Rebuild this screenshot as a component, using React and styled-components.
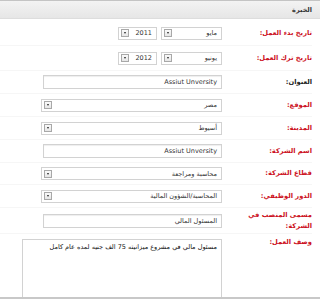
import React from 'react';
import styled, { createGlobalStyle } from 'styled-components';

const GlobalStyle = createGlobalStyle`
  html, body {
    margin: 0;
    padding: 0;
    background: #fff;
  }
  body {
    font-family: Tahoma, "DejaVu Sans", sans-serif;
  }
`;

const Page = styled.div`
  direction: rtl;
  width: 320px;
  height: 299px;
  box-sizing: border-box;
  overflow: hidden;
  border-top: 1px solid #c4c4c4;
  border-bottom: 2px solid #c8c8c8;
  background: #fff;
`;

const Header = styled.div`
  height: 17px;
  display: flex;
  align-items: center;
  padding-right: 8px;
  background: linear-gradient(#f3f3f3, #e6e6e6);
  border-bottom: 1px solid #ddd;
  font-size: 6.5px;
  font-weight: bold;
  color: #333;
`;

const Form = styled.div`
  padding: 2px 8px 0 0;
`;

const Row = styled.div`
  display: grid;
  grid-template-columns: 90px 200px;
  align-items: ${p => (p.top ? 'start' : 'center')};
  min-height: ${p => p.h || 22}px;
  border-bottom: 1px solid #f6f6f6;
`;

const Label = styled.div`
  font-size: 6.7px;
  font-weight: bold;
  line-height: 11px;
  color: ${p => (p.plain ? '#222' : '#cc1022')};
  padding-top: ${p => (p.top ? 3 : 0)}px;
  padding-left: 10px;
`;

const Field = styled.div`
  display: flex;
  gap: 4px;
  align-items: center;
`;

const Box = styled.div`
  box-sizing: border-box;
  width: ${p => p.w}px;
  height: 13px;
  border: 1px solid #d2d2d2;
  background: #fff;
  display: flex;
  align-items: center;
  justify-content: space-between;
  padding: 0 4px 0 2px;
  font-size: 6.5px;
  color: #333;
  font-family: ${p => (p.latin ? '"DejaVu Sans", sans-serif' : 'inherit')};
`;

const TextInput = styled(Box)`
  height: 14px;
  box-shadow: inset 0 1px 1px #eee;
`;

const DropBtn = styled.span`
  order: 2;
  box-sizing: border-box;
  width: 8px;
  height: 8px;
  border: 1px solid #a8a8a8;
  background: linear-gradient(#fafafa, #e6e6e6);
  display: flex;
  align-items: center;
  justify-content: center;

  &::after {
    content: '';
    border-left: 1.5px solid transparent;
    border-right: 1.5px solid transparent;
    border-top: 2px solid #222;
  }
`;

const TextArea = styled.div`
  box-sizing: border-box;
  width: 200px;
  height: 90px;
  border: 1px solid #d2d2d2;
  padding: 3px 4px;
  font-size: 6.5px;
  color: #111;
  margin-top: 5px;
`;

const Select = ({ w, value }) => (
  <Box w={w}>
    <span>{value}</span>
    <DropBtn />
  </Box>
);

export default function App() {
  return (
    <>
      <GlobalStyle />
      <Page>
        <Header>الخبرة</Header>
        <Form>
          <Row h={24}>
            <Label>تاريخ بدء العمل:</Label>
            <Field>
              <Select w={61} value="مايو" />
              <Select w={39} value="2011" />
            </Field>
          </Row>
          <Row h={24}>
            <Label>تاريخ ترك العمل:</Label>
            <Field>
              <Select w={61} value="يونيو" />
              <Select w={39} value="2012" />
            </Field>
          </Row>
          <Row h={22}>
            <Label plain>العنوان:</Label>
            <Field>
              <TextInput w={179} latin>Assiut Unversity</TextInput>
            </Field>
          </Row>
          <Row h={22}>
            <Label>الموقع:</Label>
            <Field>
              <Select w={181} value="مصر" />
            </Field>
          </Row>
          <Row h={22}>
            <Label>المدينة:</Label>
            <Field>
              <Select w={181} value="أسيوط" />
            </Field>
          </Row>
          <Row h={22}>
            <Label>اسم الشركة:</Label>
            <Field>
              <TextInput w={179} latin>Assiut Unversity</TextInput>
            </Field>
          </Row>
          <Row h={21}>
            <Label>قطاع الشركة:</Label>
            <Field>
              <Select w={181} value="محاسبة ومراجعة" />
            </Field>
          </Row>
          <Row h={22}>
            <Label>الدور الوظيفي:</Label>
            <Field>
              <Select w={181} value="المحاسبة/الشؤون المالية" />
            </Field>
          </Row>
          <Row h={25}>
            <Label>مسمى المنصب في الشركة:</Label>
            <Field>
              <TextInput w={179}>المسئول المالي</TextInput>
            </Field>
          </Row>
          <Row top>
            <Label top>وصف العمل:</Label>
            <TextArea>مسئول مالي في مشروع ميزانيته 75 الف جنيه لمده عام كامل</TextArea>
          </Row>
        </Form>
      </Page>
    </>
  );
}
